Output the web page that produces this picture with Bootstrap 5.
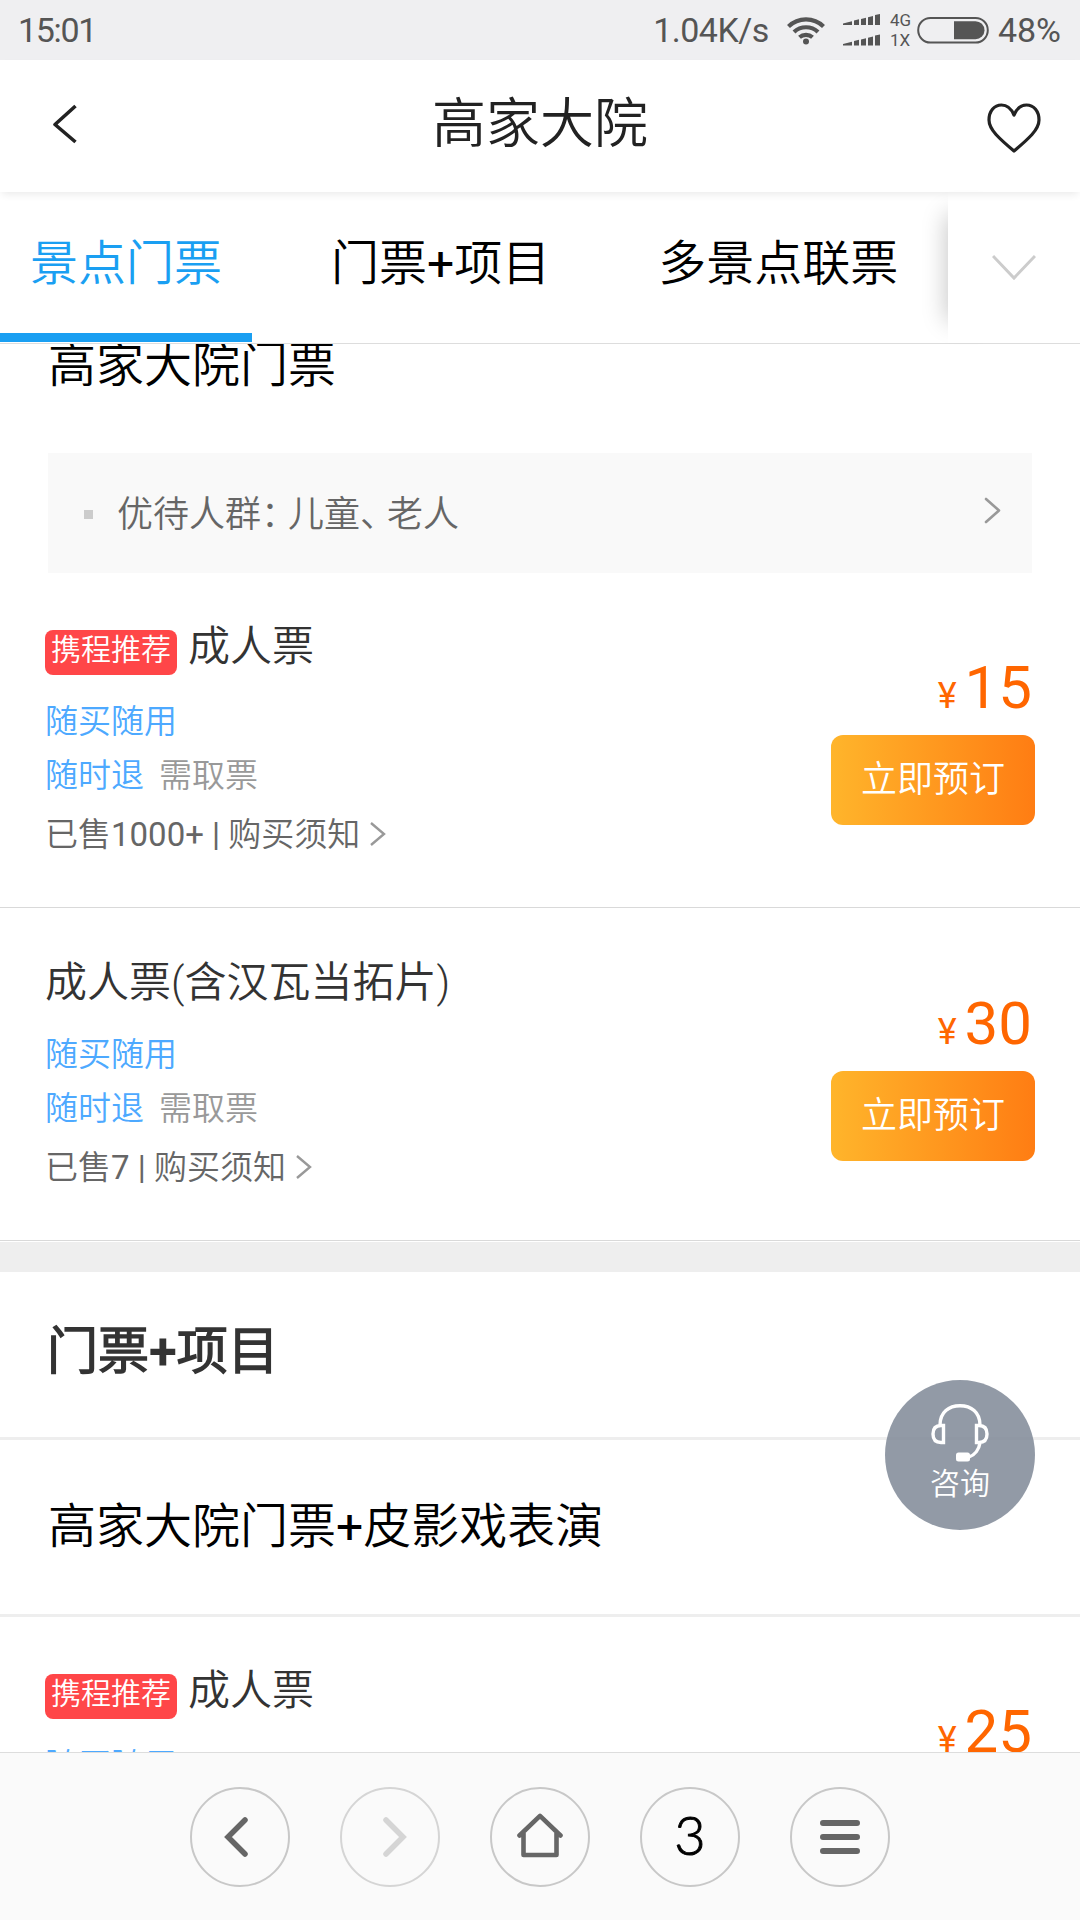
<!DOCTYPE html>
<html lang="zh-CN">
<head>
<meta charset="utf-8">
<meta name="viewport" content="width=device-width, initial-scale=1">
<title>高家大院</title>
<link href="https://cdn.jsdelivr.net/npm/bootstrap@5.3.0/dist/css/bootstrap.min.css" rel="stylesheet">
<style>
body{font-family:Roboto,"Noto Sans CJK SC DemiLight","Noto Sans CJK SC",sans-serif;font-weight:350;color:#333;background:#fff}
.screen{width:1080px;height:1920px}
svg{display:block;flex:none}
.statusbar{height:60px;background:#efeff1;color:#555;font-size:34px;line-height:60px;font-weight:400;padding:0 19px 0 18px}
.clock{letter-spacing:-1.3px}
.speed{letter-spacing:-.5px}
.net-type{font-size:17px;line-height:20px;width:22px;margin:0 5px 0 9px}
.titlebar{height:132px;box-shadow:0 4px 8px -2px rgba(0,0,0,.09);z-index:2;padding:0 39px 0 53px}
.titlebar h1{font-size:54px;line-height:60px;color:#222;font-weight:350;padding:0 14px 3px 0}
.titlebar .back{margin-bottom:5px}
.tabs{height:152px;border-bottom:1px solid #ddd;font-size:48px;color:#000}
.tabs .tab-item{padding:0 30px;height:150px;line-height:144px;white-space:nowrap;margin-right:48px;border-bottom:9px solid transparent}
.tabs .tab-item.active{color:#1a9ff2;border-color:#1a9ff2;margin-right:49px}
.plus{font-weight:400}
.tab-more{width:132px;background:#fff;z-index:1}
.tab-more::before{content:"";position:absolute;left:0;top:22px;bottom:22px;width:40px;box-shadow:-2px 0 24px rgba(0,0,0,.22);z-index:-2}
.tab-more::after{content:"";position:absolute;inset:0;background:#fff;z-index:-1}
.group-first{height:109px;font-size:48px;line-height:43px;color:#000;padding-left:48px}
.discount{height:120px;margin:0 48px;background:#f9f9f9;color:#666;font-size:36px;padding:0 31px 0 36px}
.bullet{width:9px;height:9px;background:#ccc;margin:2px 24px 0 0}
.half{font-feature-settings:"halt" 1;padding-right:9px}
.ticket{height:335px;border-bottom:1px solid #d9d9d9;padding:42px 45px 0 45px;font-size:33px;line-height:54px}
.ticket.second{height:333px;padding-top:43px}
.ticket-name{height:60px;font-size:42px;line-height:63px;margin-bottom:20px}
.second .ticket-name{margin-bottom:17px}
.tag-rec{background:#ff4648;color:#fff;font-size:30px;line-height:40px;height:45px;width:132px;border-radius:8px;margin-right:11px}
.blue{color:#4da9ff;margin-right:15px}
.sold{color:#666;margin-top:5px}
.sold b{font-weight:400}
.sold svg{margin:0 0 2px 9px}
.price{color:#ff6600;font-weight:400;line-height:70px;height:70px;font-size:60px;margin:38px 3px 12px 0}
.price small{font-size:36px;margin-right:8px}
.btn-book{width:204px;height:90px;border:0;border-radius:12px;color:#fff;font-size:36px;font-weight:350;line-height:90px;padding:0;background:linear-gradient(90deg,#ffb52b,#ff7d13);font-family:inherit}
.gap-strip{height:30px;margin-top:1px;background:#eee}
.section-head{height:168px;border-bottom:3px solid #eee;font-size:51px;font-weight:700;line-height:159px;padding-left:47px}
.group-head{height:177px;border-bottom:3px solid #eee;font-size:48px;line-height:174px;color:#000;padding-left:48px}
.consult{width:150px;height:150px;left:885px;top:1380px;background:rgba(131,140,154,.88);color:#fff;font-size:30px;line-height:42px;z-index:3;padding-top:23px}
.browser-bar{height:168px;border-top:1px solid #ddd;background:#fafafa;gap:50px}
.round{width:100px;height:100px;border:2px solid #c8c8c8;color:#000;font:300 54px/92px Lato,sans-serif;-webkit-text-stroke:1px #000}
</style>
</head>
<body>
<div class="screen d-flex flex-column overflow-hidden position-relative">
  <div class="statusbar d-flex align-items-center flex-shrink-0">
    <span class="clock me-auto">15:01</span>
    <span class="speed">1.04K/s</span>
    <svg style="margin-left:17px" width="40" height="30" viewBox="0 0 40 30" fill="none" stroke="#555" stroke-width="4.2"><path d="M2.5 11.5a25 25 0 0 1 35 0M8 17a17.5 17.5 0 0 1 24 0M13.5 22.3a9.8 9.8 0 0 1 13 0"/><circle cx="20" cy="26.5" r="3" fill="#555" stroke="none"/></svg>
    <svg style="margin-left:17px" width="38" height="32" viewBox="0 0 38 32" fill="#555"><g id="sig"><path d="M0 11V9.5L9 7.3V11zM11 11V6.5l5-1.2V11zM18 11V5l5-1.3V11zM25 11V3.2l5-1.2V11zM32 11V1l5-1v11z"/></g><use href="#sig" y="20.500"/></svg>
    <div class="net-type"><div>4G</div><div>1X</div></div>
    <svg width="72" height="28" viewBox="0 0 72 28"><rect x="1.2" y="2" width="69.600" height="24.500" rx="12.200" fill="none" stroke="#555" stroke-width="2"/><path d="M37 5.200H58.500a9 9 0 0 1 0 18H37z" fill="#555"/></svg>
    <span style="margin-left:9px">48%</span>
  </div>

  <header class="titlebar d-flex align-items-center justify-content-between flex-shrink-0 position-relative">
    <svg class="back" width="54" height="40" viewBox="0 0 54 40" fill="none" stroke="#222" stroke-width="3.600" stroke-linejoin="round"><path d="M22.500 2L2 20.500 22.500 38"/></svg>
    <h1 class="m-0">高家大院</h1>
    <svg class="mt-1" width="54" height="50" viewBox="0 0 54 50" fill="none" stroke="#222" stroke-width="3.200" stroke-linejoin="round"><path d="M27 12C24 5 19.500 2 14.500 2 7 2 2 8.500 2 17c0 6 3 10 7 14.500C14.500 37.500 21 43 27 48c6-5 12.500-10.500 18-16.500 4-4.500 7-8.500 7-14.500C52 8.500 47 2 39.500 2 34.500 2 30 5 27 12z"/></svg>
  </header>

  <nav class="tabs d-flex flex-shrink-0 position-relative">
    <div class="d-flex flex-grow-1 overflow-hidden">
      <div class="tab-item active">景点门票</div>
      <div class="tab-item">门票<span class="plus">+</span>项目</div>
      <div class="tab-item me-0">多景点联票</div>
    </div>
    <div class="tab-more position-relative d-flex justify-content-center flex-shrink-0">
      <svg style="margin-top:62px" width="44" height="28" viewBox="0 0 44 28" fill="none" stroke="#ccc" stroke-width="3"><path d="M1 2l21 22L43 2"/></svg>
    </div>
  </nav>

  <main class="flex-grow-1 overflow-hidden" style="min-height:0">
    <div class="group-first">高家大院门票</div>
    <div class="discount d-flex align-items-center">
      <span class="bullet"></span>
      <span class="me-auto pt-1">优待人群<span class="half">：</span>儿童<span class="half">、</span>老人</span>
      <svg class="mb-1" width="17" height="28" viewBox="0 0 17 28" fill="none" stroke="#999" stroke-width="2.600" stroke-linecap="round" stroke-linejoin="round"><path d="M2 2l13 11.500L2 25"/></svg>
    </div>

    <section class="ticket d-flex justify-content-between">
      <div>
        <div class="ticket-name d-flex"><span class="tag-rec text-center align-self-end">携程推荐</span>成人票</div>
        <div class="blue">随买随用</div>
        <div><span class="blue">随时退</span><span style="color:#999">需取票</span></div>
        <div class="sold d-flex align-items-center"><span>已售<b>1000+ | </b>购买须知</span><svg width="17" height="26" viewBox="0 0 17 26" fill="none" stroke="#999" stroke-width="2.400"><path d="M2 2l13 11L2 24"/></svg></div>
      </div>
      <div class="d-flex flex-column align-items-end">
        <div class="price"><small>¥</small>15</div>
        <button class="btn btn-book">立即预订</button>
      </div>
    </section>

    <section class="ticket second d-flex justify-content-between">
      <div>
        <div class="ticket-name">成人票(含汉瓦当拓片)</div>
        <div class="blue">随买随用</div>
        <div><span class="blue">随时退</span><span style="color:#999">需取票</span></div>
        <div class="sold d-flex align-items-center"><span>已售<b>7 | </b>购买须知</span><svg width="17" height="26" viewBox="0 0 17 26" fill="none" stroke="#999" stroke-width="2.400"><path d="M2 2l13 11L2 24"/></svg></div>
      </div>
      <div class="d-flex flex-column align-items-end">
        <div class="price"><small>¥</small>30</div>
        <button class="btn btn-book">立即预订</button>
      </div>
    </section>

    <div class="gap-strip"></div>
    <h2 class="section-head m-0">门票+项目</h2>
    <div class="group-head">高家大院门票<span class="plus">+</span>皮影戏表演</div>

    <section class="ticket d-flex justify-content-between">
      <div>
        <div class="ticket-name d-flex"><span class="tag-rec text-center align-self-end">携程推荐</span>成人票</div>
        <div class="blue">随买随用</div>
      </div>
      <div class="price"><small>¥</small>25</div>
    </section>
  </main>

  <div class="consult rounded-circle position-absolute d-flex flex-column align-items-center">
    <svg width="60" height="60" viewBox="0 0 60 60" fill="none" stroke="#fff" stroke-width="3.400"><path d="M10 22C10 9 19 2.700 30 2.700S50 9 50 22M13.500 22.500v17h-2.500C5.500 39.500 3 36 3 31s2.500-8.500 8-8.500zM46.500 22.500v17h2.500c5.500 0 8-3.500 8-8.500s-2.500-8.500-8-8.500zM50 40c-1 6-5 12-11 14"/><rect x="26" y="49.500" width="14" height="9" rx="2.500" fill="#fff" stroke="none"/></svg>
    <span>咨询</span>
  </div>

  <footer class="browser-bar d-flex justify-content-center align-items-center flex-shrink-0">
    <div class="round rounded-circle d-flex align-items-center justify-content-center"><svg width="44" height="44" viewBox="0 0 44 44" fill="none" stroke="#666" stroke-width="5.500" stroke-linecap="round"><path d="M27 5L10 22l17 17"/></svg></div>
    <div class="round rounded-circle d-flex align-items-center justify-content-center" style="border-color:#d5d5d5"><svg width="44" height="44" viewBox="0 0 44 44" fill="none" stroke="#d5d5d5" stroke-width="5.500" stroke-linecap="round"><path d="M18 5l17 17-17 17"/></svg></div>
    <div class="round rounded-circle d-flex align-items-center justify-content-center"><svg width="48" height="48" viewBox="0 0 48 48" fill="none" stroke="#666" stroke-width="4.600" stroke-linecap="round" stroke-linejoin="round"><path d="M3.500 22.500L24 2.800l20.500 19.700M7.500 20v22h33V20"/></svg></div>
    <div class="round rounded-circle text-center">3</div>
    <div class="round rounded-circle d-flex align-items-center justify-content-center"><svg width="40" height="34" viewBox="0 0 40 34" stroke="#666" stroke-width="6" stroke-linecap="round"><path d="M3 3h34M3 17h34M3 31h34"/></svg></div>
  </footer>
</div>
<script src="https://cdn.jsdelivr.net/npm/bootstrap@5.3.0/dist/js/bootstrap.bundle.min.js"></script>
</body>
</html>
